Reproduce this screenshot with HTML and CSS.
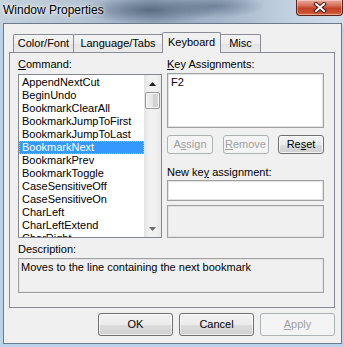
FILE: index.html
```html
<!DOCTYPE html>
<html>
<head>
<meta charset="utf-8">
<title>Window Properties</title>
<link rel="stylesheet" href="styles.css">
</head>
<body>
<div class="window">
  <div class="titlebar">
    <span class="title">Window Properties</span>
    <div class="close">
      <svg width="14" height="11" viewBox="0 0 14 11">
        <path d="M3 2 L11 9 M11 2 L3 9" stroke="#4a1a12" stroke-width="4" stroke-linecap="square"/>
        <path d="M3 2 L11 9 M11 2 L3 9" stroke="#ffffff" stroke-width="2" stroke-linecap="square"/>
      </svg>
    </div>
  </div>
  <div class="client">
    <div class="tabs">
      <div class="tab w1">Color/Font</div>
      <div class="tab w2">Language/Tabs</div>
      <div class="tab w3 active">Keyboard</div>
      <div class="tab w4">Misc</div>
    </div>
    <div class="panel">
      <div class="cols">
        <div class="col">
          <div class="label"><u>C</u>ommand:</div>
          <div class="listbox">
            <ul class="items">
              <li>AppendNextCut</li>
              <li>BeginUndo</li>
              <li>BookmarkClearAll</li>
              <li>BookmarkJumpToFirst</li>
              <li>BookmarkJumpToLast</li>
              <li class="sel">BookmarkNext</li>
              <li>BookmarkPrev</li>
              <li>BookmarkToggle</li>
              <li>CaseSensitiveOff</li>
              <li>CaseSensitiveOn</li>
              <li>CharLeft</li>
              <li>CharLeftExtend</li>
              <li>CharRight</li>
            </ul>
            <div class="scrollbar">
              <div class="sb-btn">
                <svg width="7" height="4" viewBox="0 0 7 4"><path d="M0 4 L3.5 0 L7 4 Z" fill="#1e1e1e"/></svg>
              </div>
              <div class="thumb"></div>
              <div class="track"></div>
              <div class="sb-btn">
                <svg width="7" height="4" viewBox="0 0 7 4"><path d="M0 0 L7 0 L3.5 4 Z" fill="#6a6a6a"/></svg>
              </div>
            </div>
          </div>
        </div>
        <div class="col">
          <div class="label label-r"><u>K</u>ey Assignments:</div>
          <div class="keylist">F2</div>
          <div class="kbtns">
            <div class="btn small disabled">A<u>s</u>sign</div>
            <div class="btn small disabled"><u>R</u>emove</div>
            <div class="btn small">Re<u>s</u>et</div>
          </div>
          <div class="label label-new">New ke<u>y</u> assignment:</div>
          <div class="input"></div>
          <div class="graybox"></div>
        </div>
      </div>
      <div class="label desc-label">Description:</div>
      <div class="desc">Moves to the line containing the next bookmark</div>
    </div>
    <div class="buttons">
      <div class="btn big">OK</div>
      <div class="btn big">Cancel</div>
      <div class="btn big disabled"><u>A</u>pply</div>
    </div>
  </div>
</div>
</body>
</html>
```

FILE: styles.css
```css
html, body {
  margin: 0;
  padding: 0;
}
body {
  width: 344px;
  height: 347px;
  overflow: hidden;
  font-family: "Liberation Sans", Arial, sans-serif;
  font-size: 11px;
  color: #000;
}
.window {
  width: 344px;
  height: 347px;
  box-sizing: border-box;
  padding: 0 2px 3px 3px;
  display: flex;
  flex-direction: column;
  background:
    radial-gradient(ellipse 70px 14px at 150px 10px, rgba(70, 88, 112, 0.75), rgba(70, 88, 112, 0) 100%),
    radial-gradient(ellipse 50px 12px at 215px 6px, rgba(80, 98, 122, 0.6), rgba(80, 98, 122, 0) 100%),
    linear-gradient(to bottom, rgba(0,0,0,0) 0, rgba(0,0,0,0) 24px, #bcd2ea 30px, #bcd2ea 100%),
    linear-gradient(to right, #c6d2de 0%, #b3c2d3 25%, #96a8bd 45%, #a6b7ca 65%, #c3d2e2 85%, #d0dcea 100%);
}
.titlebar {
  height: 23px;
  flex: none;
  display: flex;
  justify-content: space-between;
  align-items: flex-start;
}
.title {
  font-size: 12px;
  line-height: 14px;
  padding-top: 3px;
  color: #000;
  text-shadow: 0 0 6px rgba(255,255,255,0.9), 0 0 3px rgba(255,255,255,0.9);
}
.close {
  width: 47px;
  height: 16px;
  margin-right: -1px;
  box-sizing: border-box;
  border: 1px solid #5e2218;
  border-top: none;
  border-radius: 0 0 4px 4px;
  background: linear-gradient(to bottom, #e9a99a 0%, #d8755f 35%, #c3442a 55%, #c9502f 85%, #e07a55 100%);
  box-shadow: inset 0 0 0 1px rgba(255,255,255,0.35);
  display: flex;
  align-items: center;
  justify-content: center;
}
.client {
  flex: 1;
  background: #f0f0f0;
  border: 1px solid #6b7a8c;
  padding-top: 8px;
  display: flex;
  flex-direction: column;
}
.tabs {
  display: flex;
  align-items: flex-end;
  height: 20px;
  margin-left: 9px;
  position: relative;
  z-index: 2;
}
.tab {
  box-sizing: border-box;
  height: 18px;
  border: 1px solid #898c95;
  border-bottom: none;
  border-radius: 2px 2px 0 0;
  background: linear-gradient(to bottom, #f4f4f4, #eeeeee 50%, #e4e4e4 51%, #ebebeb);
  text-align: center;
  line-height: 17px;
  margin-left: -1px;
}
.tab.w1 { width: 61px; margin-left: 0; }
.tab.w2 { width: 90px; }
.tab.w3 { width: 59px; }
.tab.w4 { width: 41px; }
.tab.active {
  height: 21px;
  margin-bottom: -1px;
  background: #f0f0f0;
  line-height: 18px;
  position: relative;
  z-index: 3;
}
.panel {
  margin: 0 6px 0 5px;
  height: 256px;
  box-sizing: border-box;
  border: 1px solid #898c95;
  background: #f0f0f0;
  padding: 4px 10px 14px 8px;
}
.cols {
  display: grid;
  grid-template-columns: 144px 157px;
  column-gap: 5px;
}
.col {
  display: flex;
  flex-direction: column;
}
.label {
  height: 14px;
  line-height: 14px;
  margin-bottom: 3px;
}
.label-r { margin-bottom: 2px; }
.listbox {
  height: 164px;
  box-sizing: border-box;
  border: 1px solid #828790;
  background: #fff;
  display: flex;
  overflow: hidden;
}
.items {
  list-style: none;
  margin: 0;
  padding: 1px 0 0 0;
  flex: 1;
  overflow: hidden;
}
.items li {
  height: 13px;
  line-height: 13px;
  padding-left: 3px;
  white-space: nowrap;
}
.items li.sel {
  background: #3399ff;
  color: #fff;
  outline: 1px dotted #f0c060;
  outline-offset: -1px;
}
.scrollbar {
  width: 17px;
  flex: none;
  display: flex;
  flex-direction: column;
  background: linear-gradient(to right, #e3e3e3, #f1f1f1 30%, #f1f1f1 70%, #e8e8e8);
}
.sb-btn {
  height: 17px;
  flex: none;
  display: flex;
  align-items: center;
  justify-content: center;
}
.thumb {
  height: 17px;
  flex: none;
  margin: 0 1px;
  box-sizing: border-box;
  border: 1px solid #979797;
  border-radius: 2px;
  background: linear-gradient(to right, #f2f2f2, #e4e4e4 50%, #cfcfcf 51%, #d8d8d8);
  box-shadow: inset 0 0 0 1px #f8f8f8;
}
.track { flex: 1; }
.keylist {
  height: 55px;
  box-sizing: border-box;
  border: 1px solid #a0a0a0;
  box-shadow: inset 0 0 0 1px #e3e3e3;
  background: #fff;
  padding: 2px 3px;
  line-height: 13px;
}
.kbtns {
  display: flex;
  justify-content: space-between;
  margin-top: 7px;
}
.btn {
  box-sizing: border-box;
  border: 1px solid #707070;
  border-radius: 3px;
  background: linear-gradient(to bottom, #f2f2f2 0%, #ebebeb 50%, #dddddd 51%, #cfcfcf 100%);
  box-shadow: inset 0 0 0 1px rgba(255,255,255,0.7);
  text-align: center;
  color: #000;
}
.btn.small {
  width: 46px;
  height: 19px;
  line-height: 17px;
}
.btn.disabled {
  border-color: #adb2b5;
  background: #f4f4f4;
  box-shadow: none;
  color: #a0a0a0;
}
.label-new {
  margin-top: 11px;
  margin-bottom: 1px;
}
.input {
  height: 21px;
  box-sizing: border-box;
  border: 1px solid #a0a0a0;
  box-shadow: inset 0 0 0 1px #e3e3e3;
  background: #fff;
}
.graybox {
  margin-top: 4px;
  height: 33px;
  box-sizing: border-box;
  border: 1px solid #a0a0a0;
  box-shadow: inset 0 0 0 1px #e3e3e3;
  background: #f0f0f0;
}
.desc-label {
  margin-top: 4px;
  margin-bottom: 2px;
}
.desc {
  height: 35px;
  box-sizing: border-box;
  border: 1px solid #a0a0a0;
  box-shadow: inset 0 0 0 1px #e3e3e3;
  background: #f0f0f0;
  padding: 2px 2px;
  line-height: 13px;
}
.buttons {
  display: flex;
  justify-content: flex-end;
  gap: 6px;
  margin: 5px 6px 0 0;
}
.btn.big {
  width: 75px;
  height: 23px;
  line-height: 21px;
}
```
